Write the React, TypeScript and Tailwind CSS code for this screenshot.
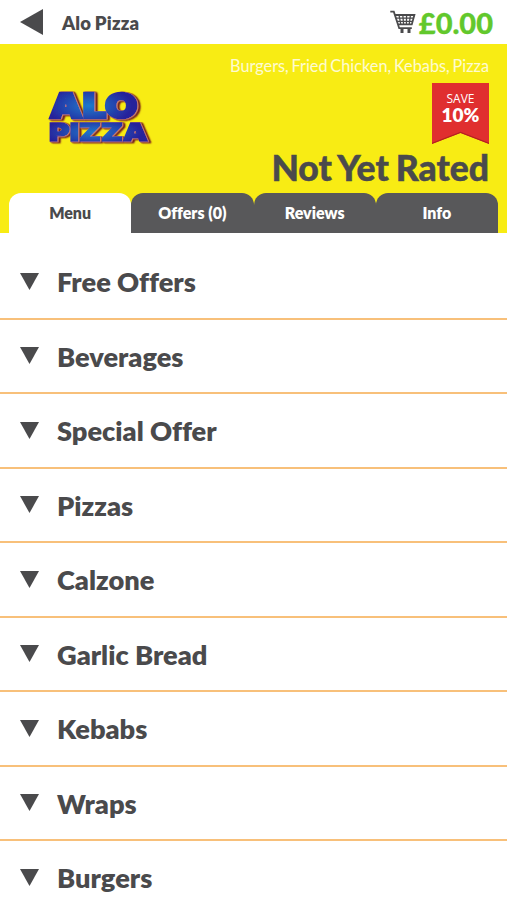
import React, { useState } from "react";

const tabs = ["Menu", "Offers (0)", "Reviews", "Info"];

const categories = [
  "Free Offers",
  "Beverages",
  "Special Offer",
  "Pizzas",
  "Calzone",
  "Garlic Bread",
  "Kebabs",
  "Wraps",
  "Burgers",
];

function CartIcon() {
  return (
    <svg width="26" height="24" viewBox="0 0 26 24" fill="none">
      <path
        d="M0.3 1.6H3.8L9.2 18.2H21.8M5 5H24.4L21.8 14.4H8"
        stroke="#4a4a4c"
        strokeWidth="1.8"
      />
      <path
        d="M6 8.2H23.5M7 11.3H22.7M9 5L10.8 14.4M12.8 5L13.6 14.4M16.6 5L16.4 14.4M20.4 5L19.2 14.4"
        stroke="#4a4a4c"
        strokeWidth="1.3"
      />
      <path d="M10.5 18V23H13.5V18M17.5 18V23H20.5V18" fill="#4a4a4c" />
    </svg>
  );
}

function Logo() {
  return (
    <svg
      width="106"
      height="72"
      viewBox="0 -8 106 72"
      className="font-['Inter',sans-serif] font-black"
    >
      <defs>
        <radialGradient id="logoBlue" cx="0.45" cy="0.5" r="0.5">
          <stop offset="0" stopColor="#1d7acb" />
          <stop offset="1" stopColor="#27209a" />
        </radialGradient>
        {/* Extruded copies stacked behind each word */}
        <filter id="logoDepth" x="-10%" y="-10%" width="120%" height="130%">
          <feDropShadow dx="0.8" dy="0.4" stdDeviation="0" floodColor="#d98a6a" />
          <feDropShadow dx="1.2" dy="0.5" stdDeviation="0" floodColor="#7c2a20" />
          <feDropShadow dx="1.2" dy="0.4" stdDeviation="0" floodColor="#7c2a20" />
        </filter>
      </defs>
      <g fill="url(#logoBlue)" stroke="url(#logoBlue)" filter="url(#logoDepth)">
        <text x="1.5" y="27.3" fontSize="34.5" strokeWidth="2.6" textLength="88" lengthAdjust="spacingAndGlyphs">
          ALO
        </text>
        <text x="1" y="50.2" fontSize="25" strokeWidth="1.4" textLength="99" lengthAdjust="spacingAndGlyphs">
          PIZZA
        </text>
      </g>
    </svg>
  );
}

export default function App() {
  const [activeTab, setActiveTab] = useState("Menu");

  return (
    <div className="h-[900px] w-full overflow-hidden bg-white font-['Lato',sans-serif] text-[#4a4a4c]">
      {/* Top bar */}
      <header className="flex h-11 items-center justify-between pl-5 pr-3.5">
        <div className="flex items-center">
          <svg width="23" height="26" viewBox="0 0 23 26">
            <path d="M0 13L23 0V26Z" fill="#4a4a4c" />
          </svg>
          <span className="ml-[19px] pt-[3px] text-[18.5px] font-extrabold tracking-[0.2px] [word-spacing:-1px]">
            Alo Pizza
          </span>
        </div>
        <div className="flex items-center">
          <CartIcon />
          <span className="ml-[3px] text-[29px] font-black leading-none text-[#62c82c] [-webkit-text-stroke:0.3px]">
            £0.00
          </span>
        </div>
      </header>

      {/* Restaurant banner */}
      <section className="flex h-[189px] flex-col bg-[#f8ec14]">
        <div className="flex h-[149px] justify-between pl-12 pr-[18px]">
          <div className="pt-[39px]">
            <Logo />
          </div>
          <div className="flex flex-col items-end">
            <p className="mt-3 text-[16.3px] leading-5 text-white/80 [word-spacing:-1.4px]">
              Burgers, Fried Chicken, Kebabs, Pizza
            </p>
            <div className="relative mt-[7px] flex h-[61px] w-[57px] flex-col items-center bg-[#e02f2f] pt-2 text-white [clip-path:polygon(0_0,100%_0,100%_100%,50%_82%,0_100%)]">
              <span className="font-['Open_Sans',sans-serif] text-[12px] leading-4">SAVE</span>
              <span className="text-[19px] font-extrabold leading-[15px]">10%</span>
              {/* Shaded fold along the notch */}
              <svg className="absolute bottom-0 left-0" width="57" height="13" viewBox="0 0 57 13">
                <path d="M0 12.5L28.5 1.5L57 12.5" fill="none" stroke="#b3241f" strokeWidth="1.6" />
              </svg>
            </div>
            <h1 className="mt-[5px] text-[35.5px] font-black leading-[38px] [-webkit-text-stroke:0.5px] [word-spacing:-1.5px]">
              Not Yet Rated
            </h1>
          </div>
        </div>

        {/* Tabs */}
        <nav className="flex h-10 px-[9px]">
          {tabs.map((tab) => (
            <button
              key={tab}
              onClick={() => setActiveTab(tab)}
              className={`flex-1 rounded-t-xl text-[16px] font-extrabold [font-variant-ligatures:none] ${
                tab === activeTab ? "bg-white text-[#4a4a4c]" : "bg-[#58585a] text-white"
              }`}
            >
              {tab}
            </button>
          ))}
        </nav>
      </section>

      {/* Menu categories */}
      <ul className="mt-3">
        {categories.map((category) => (
          <li
            key={category}
            className="flex h-[74.5px] items-center border-b-2 border-[#f8c07a] pl-5"
          >
            <svg width="19" height="17" viewBox="0 0 19 17">
              <path d="M0 0H19L9.5 17Z" fill="#4a4a4c" />
            </svg>
            <span className="ml-[18px] pt-[2px] text-[27.2px] font-extrabold leading-8 [font-variant-ligatures:none]">
              {category}
            </span>
          </li>
        ))}
      </ul>
    </div>
  );
}
